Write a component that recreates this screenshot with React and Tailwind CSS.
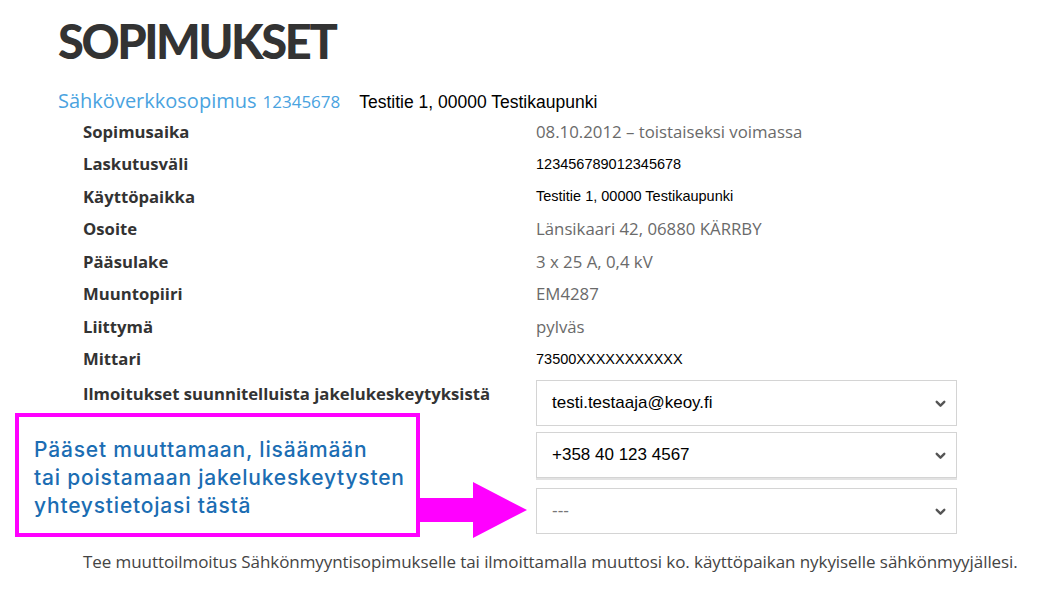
import React from 'react';

const rows = [
  { label: 'Sopimusaika', value: '08.10.2012 – toistaiseksi voimassa', kind: 'soft' },
  { label: 'Laskutusväli', value: '123456789012345678', kind: 'plain' },
  { label: 'Käyttöpaikka', value: 'Testitie 1, 00000 Testikaupunki', kind: 'small' },
  { label: 'Osoite', value: 'Länsikaari 42, 06880 KÄRRBY', kind: 'soft' },
  { label: 'Pääsulake', value: '3 x 25 A, 0,4 kV', kind: 'soft' },
  { label: 'Muuntopiiri', value: 'EM4287', kind: 'soft' },
  { label: 'Liittymä', value: 'pylväs', kind: 'soft' },
  { label: 'Mittari', value: '73500XXXXXXXXXXX', kind: 'plain' },
];

const valueClass = {
  soft: "font-['Open_Sans',sans-serif] text-[16.8px] text-[#6a6a6a]",
  plain: "font-['Liberation_Sans',Arial,sans-serif] text-[14.5px] text-black pt-[2px]",
  small: "font-['Liberation_Sans',Arial,sans-serif] text-[14.5px] text-black pt-[2px]",
};

const Chevron = () => (
  <svg width="13" height="13" viewBox="0 0 12 12" className="text-[#555]">
    <path d="M2.5 4.5 L6 8 L9.5 4.5" fill="none" stroke="currentColor" strokeWidth="2.2" strokeLinecap="round" strokeLinejoin="round" />
  </svg>
);

const SelectBox = ({ value, muted }) => (
  <div className="h-[46px] w-[421px] border border-[#d4d4d4] bg-white flex items-center justify-between pl-[15px] pr-[9px]">
    <span className={muted ? "font-['Liberation_Sans',Arial,sans-serif] text-[17px] text-[#777]" : "font-['Liberation_Sans',Arial,sans-serif] text-[17px] text-black"}>
      {value}
    </span>
    <Chevron />
  </div>
);

export default function App() {
  return (
    <div className="relative w-[1048px] h-[600px] bg-white overflow-hidden">
      <div className="pl-[58px] pt-[14px]">
        <h1 className="font-['Lato',sans-serif] font-black text-[47px] leading-[54px] tracking-[-2.4px] text-[#333]">
          SOPIMUKSET
        </h1>

        <div className="mt-[18px] flex items-baseline h-[26px]">
          <span className="font-['Open_Sans',sans-serif] text-[20px] text-[#4aa3df]">Sähköverkkosopimus</span>
          <span className="ml-[6px] font-['Open_Sans',sans-serif] text-[17px] text-[#4aa3df]">12345678</span>
          <span className="ml-[19px] font-['Liberation_Sans',Arial,sans-serif] text-[17.5px] text-black">Testitie 1, 00000 Testikaupunki</span>
        </div>

        <div className="mt-[3px] pl-[25px]">
          {rows.map((r) => (
            <div key={r.label} className="flex items-center h-[32.5px]">
              <div className="w-[453px] font-['Open_Sans',sans-serif] font-bold text-[16.7px] text-[#333]">{r.label}</div>
              <div className={valueClass[r.kind]}>{r.value}</div>
            </div>
          ))}

          <div className="flex mt-[5px]">
            <div className="w-[453px] pt-[1px] font-['Open_Sans',sans-serif] font-bold text-[16.7px] text-[#333]">
              Ilmoitukset suunnitelluista jakelukeskeytyksistä
            </div>
            <div className="flex flex-col">
              <SelectBox value="testi.testaaja@keoy.fi" />
              <div className="mt-[6px] border-b-2 border-[#e2e2e2]">
                <SelectBox value="+358 40 123 4567" />
              </div>
              <div className="mt-[8px]">
                <SelectBox value="---" muted />
              </div>
            </div>
          </div>

          <p className="mt-[15px] font-['Open_Sans',sans-serif] text-[17px] text-[#444] tracking-[-0.07px]">
            Tee muuttoilmoitus Sähkönmyyntisopimukselle tai ilmoittamalla muuttosi ko. käyttöpaikan nykyiselle sähkönmyyjällesi.
          </p>
        </div>
      </div>

      {/* annotation callout */}
      <div className="absolute left-[15px] top-[413px] flex items-start">
        <div className="w-[405px] h-[124px] border-[4px] border-[#ff00ff] bg-white pl-[15px] pt-[19px]">
          <p className="font-['Inter',sans-serif] font-medium text-[21px] leading-[28px] tracking-[0.8px] text-[#1b6db3]">
            Pääset muuttamaan, lisäämään<br />
            tai poistamaan jakelukeskeytysten<br />
            yhteystietojasi tästä
          </p>
        </div>
        <svg width="109" height="57" viewBox="0 0 109 57" className="mt-[69px] -ml-[2px]">
          <polygon points="0,16 55,16 55,0 109,28 55,56 55,40 0,40" fill="#ff00ff" />
        </svg>
      </div>
    </div>
  );
}
